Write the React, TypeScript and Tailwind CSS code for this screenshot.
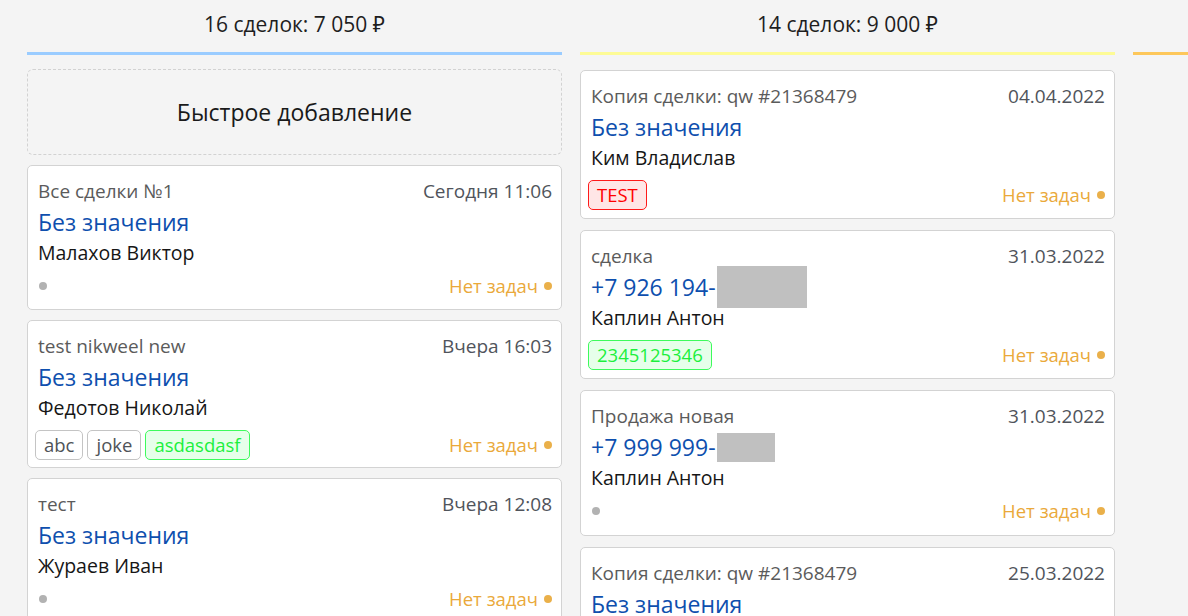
import React from 'react';

type Tag = { label: string; tone: 'gray' | 'green' | 'red' };

interface Deal {
  id: number;
  title: string;
  date: string;
  main: string;
  mask?: { w: string; h: string };
  contact: string;
  tags: Tag[];
  dot?: boolean;
}

const font = { fontFamily: '"Open Sans", "Noto Sans", Arial, sans-serif' };

const firstColumn: Deal[] = [
  { id: 1, title: 'Все сделки №1', date: 'Сегодня 11:06', main: 'Без значения', contact: 'Малахов Виктор', tags: [], dot: true },
  {
    id: 2,
    title: 'test nikweel new',
    date: 'Вчера 16:03',
    main: 'Без значения',
    contact: 'Федотов Николай',
    tags: [
      { label: 'abc', tone: 'gray' },
      { label: 'joke', tone: 'gray' },
      { label: 'asdasdasf', tone: 'green' },
    ],
  },
  { id: 3, title: 'тест', date: 'Вчера 12:08', main: 'Без значения', contact: 'Жураев Иван', tags: [], dot: true },
];

const secondColumn: Deal[] = [
  {
    id: 4,
    title: 'Копия сделки: qw #21368479',
    date: '04.04.2022',
    main: 'Без значения',
    contact: 'Ким Владислав',
    tags: [{ label: 'TEST', tone: 'red' }],
  },
  {
    id: 5,
    title: 'сделка',
    date: '31.03.2022',
    main: '+7 926 194-',
    mask: { w: 'w-[90px]', h: 'h-[42px]' },
    contact: 'Каплин Антон',
    tags: [{ label: '2345125346', tone: 'green' }],
  },
  {
    id: 6,
    title: 'Продажа новая',
    date: '31.03.2022',
    main: '+7 999 999-',
    mask: { w: 'w-[58px]', h: 'h-[29px]' },
    contact: 'Каплин Антон',
    tags: [],
    dot: true,
  },
  { id: 7, title: 'Копия сделки: qw #21368479', date: '25.03.2022', main: 'Без значения', contact: '', tags: [] },
];

const tagTone = {
  gray: 'border-[#c4c4c4] bg-white text-[#4f5358]',
  green: 'border-[#3dfb5c] bg-[#e6ffea] text-[#1cf03d]',
  red: 'border-[#ff1a1a] bg-[#ffe6e6] text-[#ff0000]',
};

function DealCard({ deal, loose }: { deal: Deal; loose?: boolean }) {
  const hasTags = deal.tags.length > 0;
  return (
    <div
      className={
        loose
          ? 'shrink-0 rounded-[5px] border border-[#d3d3d3] bg-white pb-[8px] pl-[10px] pr-[9px] pt-[12px]'
          : 'shrink-0 rounded-[5px] border border-[#d3d3d3] bg-white pb-[7px] pl-[10px] pr-[9px] pt-[12px]'
      }
    >
      <div className="flex h-[26px] items-center justify-between text-[19px] leading-[26px]">
        <span className="text-[#5b5b5b]">{deal.title}</span>
        <span className="text-[#50545b]">{deal.date}</span>
      </div>
      <div className="flex h-[36px] items-center text-[23px] leading-[36px] text-[#0e4fae]">
        <span>{deal.main}</span>
        {deal.mask && <span className={`ml-[1px] shrink-0 bg-[#c0c0c0] ${deal.mask.w} ${deal.mask.h}`} />}
      </div>
      <div className="h-[26px] text-[19.5px] leading-[26px] text-[#161616]">{deal.contact}</div>
      <div
        className={
          hasTags
            ? 'mt-[9px] flex h-[30px] items-center justify-between'
            : 'mb-[3px] mt-[7px] flex h-[26px] items-center justify-between'
        }
      >
        <div className="-ml-[3px] flex items-center gap-[4px]">
          {hasTags ? (
            deal.tags.map((t) => (
              <span
                key={t.label}
                className={`flex h-[30px] items-center rounded-[5px] border px-[8px] text-[18.5px] leading-none ${tagTone[t.tone]}`}
              >
                {t.label}
              </span>
            ))
          ) : (
            deal.dot && <span className="ml-[4px] h-[8px] w-[8px] rounded-full bg-[#b2b2b2]" />
          )}
        </div>
        <div className="flex items-center gap-[6px] text-[18.5px] text-[#eaa93a]">
          <span>Нет задач</span>
          <span className="h-[8px] w-[8px] rounded-full bg-[#eab04a]" />
        </div>
      </div>
    </div>
  );
}

function Column({
  caption,
  lineClass,
  quickAdd,
  deals,
}: {
  caption: string;
  lineClass: string;
  quickAdd?: boolean;
  deals: Deal[];
}) {
  return (
    <div className="flex w-[535px] shrink-0 flex-col">
      <div className="flex h-[52px] items-start justify-center pt-[11px] text-[21px] leading-[26px] text-[#1e1e1e]">
        {caption}
      </div>
      <div className={`h-[3px] ${lineClass}`} />
      <div className={quickAdd ? 'mt-[14px] flex flex-col gap-[10px]' : 'mt-[15px] flex flex-col gap-[11px]'}>
        {quickAdd && (
          <div className="flex h-[86px] items-center justify-center rounded-[6px] border border-dashed border-[#d2d2d2] text-[23px] text-[#1a1a1a]">
            Быстрое добавление
          </div>
        )}
        {deals.map((d) => (
          <DealCard key={d.id} deal={d} loose={!quickAdd} />
        ))}
      </div>
    </div>
  );
}

export default function App() {
  return (
    <div className="h-[616px] w-[1188px] overflow-hidden bg-[#f4f4f4]" style={font}>
      <div className="flex gap-[18px] pl-[27px]">
        <Column caption="16 сделок: 7 050 ₽" lineClass="bg-[#9accff]" quickAdd deals={firstColumn} />
        <Column caption="14 сделок: 9 000 ₽" lineClass="bg-[#fdfb96]" deals={secondColumn} />
        <Column caption="" lineClass="bg-[#fdc75a]" deals={[]} />
      </div>
    </div>
  );
}
